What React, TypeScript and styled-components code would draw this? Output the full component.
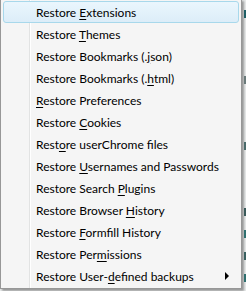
import React from 'react';
import styled, { createGlobalStyle } from 'styled-components';

const GlobalStyle = createGlobalStyle`
  html, body {
    margin: 0;
    padding: 0;
    background: #e9ebeb;
    overflow: hidden;
  }
`;

const Screen = styled.div`
  display: flex;
  align-items: flex-start;
  width: 246px;
  height: 291px;
  overflow: hidden;
`;

const Menu = styled.ul`
  list-style: none;
  margin: -1px 0 0 0;
  padding: 1px 2px;
  width: 236px;
  flex: none;
  border: 1px solid #979797;
  background:
    linear-gradient(
      to right,
      transparent 28px,
      #e2e3e3 28px,
      #e2e3e3 29px,
      #ffffff 29px,
      #ffffff 30px,
      transparent 30px
    ),
    #f5f5f5;
  box-shadow: 2px 2px 2px rgba(0, 0, 0, 0.35);
  font-family: Lato, 'Noto Sans', sans-serif;
  font-size: 12px;
  color: #000;
`;

const Item = styled.li<{ $active?: boolean }>`
  position: relative;
  display: flex;
  align-items: center;
  height: 22px;
  box-sizing: border-box;
  padding-left: 32px;
  border: 1px solid ${(p) => (p.$active ? '#a8d8eb' : 'transparent')};
  border-radius: 3px;
  background: ${(p) =>
    p.$active
      ? 'linear-gradient(to bottom, #eaf6fd 0%, #dcedf8 100%)'
      : 'transparent'};
`;

const Label = styled.span`
  white-space: pre;
`;

const Key = styled.span`
  text-decoration: underline;
  text-underline-offset: 2px;
`;

const Arrow = styled.span`
  position: absolute;
  right: 9px;
  top: 6px;
  width: 0;
  height: 0;
  border-top: 4px solid transparent;
  border-bottom: 4px solid transparent;
  border-left: 4px solid #000;
`;

const Behind = styled.div`
  flex: 1;
  display: flex;
  flex-direction: column;
  padding: 10px 0 0 2px;
  gap: 14px;
  overflow: hidden;
`;

const Mark = styled.span<{ $w: number; $c: string }>`
  display: block;
  width: ${(p) => p.$w}px;
  height: 8px;
  background: ${(p) => p.$c};
`;

type Entry = { pre: string; key: string; post: string; sub?: boolean };

const entries: Entry[] = [
  { pre: 'Restore ', key: 'E', post: 'xtensions' },
  { pre: 'Restore ', key: 'T', post: 'hemes' },
  { pre: 'Restore Bookmarks (.', key: 'j', post: 'son)' },
  { pre: 'Restore Bookmarks (.', key: 'h', post: 'tml)' },
  { pre: '', key: 'R', post: 'estore Preferences' },
  { pre: 'Restore ', key: 'C', post: 'ookies' },
  { pre: 'Rest', key: 'o', post: 're userChrome files' },
  { pre: 'Restore ', key: 'U', post: 'sernames and Passwords' },
  { pre: 'Restore Search ', key: 'P', post: 'lugins' },
  { pre: 'Restore Browser ', key: 'H', post: 'istory' },
  { pre: 'Restore ', key: 'F', post: 'ormfill History' },
  { pre: 'Restore Per', key: 'm', post: 'issions' },
  { pre: 'Restore User-', key: 'd', post: 'efined backups', sub: true },
];

const marks = [
  { w: 3, c: '#1f5f66' },
  { w: 0, c: 'transparent' },
  { w: 0, c: 'transparent' },
  { w: 2, c: '#6a7a7a' },
  { w: 0, c: 'transparent' },
  { w: 0, c: 'transparent' },
  { w: 2, c: '#4a6a6a' },
  { w: 0, c: 'transparent' },
  { w: 0, c: 'transparent' },
  { w: 3, c: '#3a5a5a' },
  { w: 3, c: '#2f7070' },
  { w: 2, c: '#3a6060' },
  { w: 3, c: '#2f6f6f' },
];

export default function App() {
  return (
    <>
      <GlobalStyle />
      <Screen>
        <Menu>
          {entries.map((e, i) => (
            <Item key={i} $active={i === 0}>
              <Label>
                {e.pre}
                <Key>{e.key}</Key>
                {e.post}
              </Label>
              {e.sub ? <Arrow /> : null}
            </Item>
          ))}
        </Menu>
        <Behind>
          {marks.map((m, i) => (
            <Mark key={i} $w={m.w} $c={m.c} />
          ))}
        </Behind>
      </Screen>
    </>
  );
}
